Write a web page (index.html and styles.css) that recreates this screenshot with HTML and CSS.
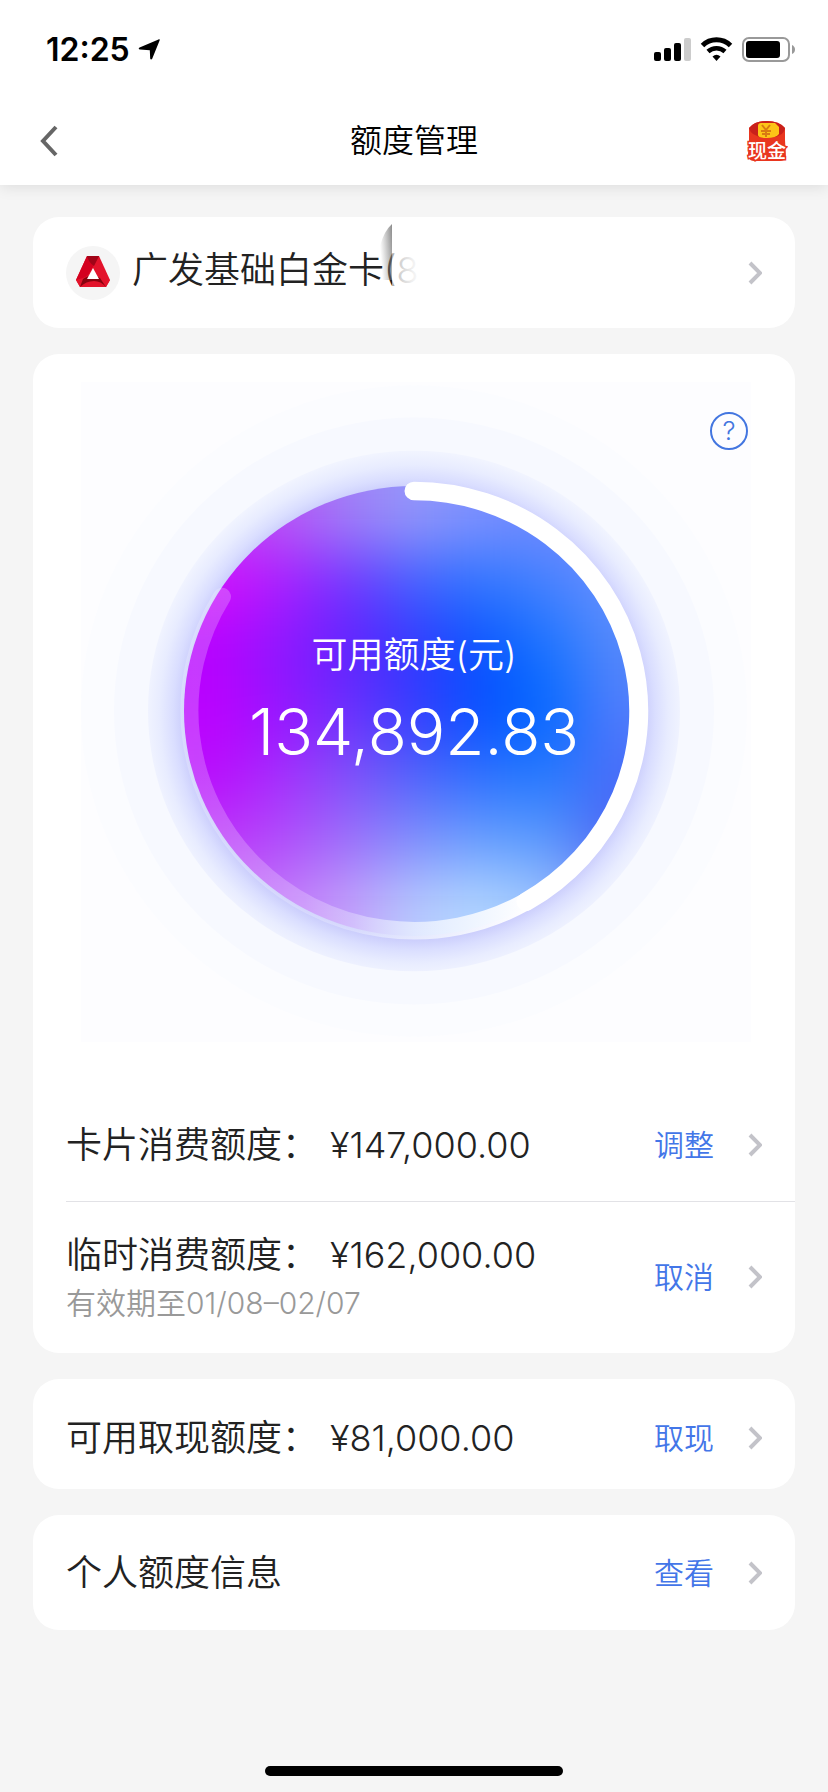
FILE: index.html
```html
<!DOCTYPE html>
<html lang="zh-CN">
<head>
<meta charset="utf-8">
<meta name="viewport" content="width=device-width, initial-scale=1">
<title>额度管理</title>
<link rel="stylesheet" href="styles.css">
</head>
<body>
<svg class="defs" width="0" height="0" aria-hidden="true">
  <symbol id="chevron" viewBox="0 0 14 24"><path d="M2 2l10 10L2 22" fill="none" stroke="#c3c3c9" stroke-width="4"/></symbol>
</svg>
<header class="header">
  <div class="status">
    <span class="clock">12:25</span>
    <svg class="location" viewBox="0 0 22 22" width="22" height="22" aria-hidden="true"><path d="M20.500 .4C21.500 0 22 .6 21.600 1.600L14.200 19.800C13.600 21 12.300 20.800 12.200 19.500L11.800 11.200 2 10.400C.5 10.200 .3 9 1.600 8.400Z"/></svg>
    <svg class="indicators" viewBox="0 0 142 26" width="142" height="26" aria-hidden="true">
      <rect x="0" y="15" width="7" height="9" rx="2"/>
      <rect x="10" y="11" width="7" height="13" rx="2"/>
      <rect x="20" y="6" width="7" height="18" rx="2"/>
      <rect x="30" y="1" width="7" height="23" rx="2" fill="#ccc"/>
      <path d="M48.500 8.500a20 20 0 0 1 28 0" fill="none" stroke="#000" stroke-width="5"/>
      <path d="M54 14.500a12.500 12.500 0 0 1 17 0" fill="none" stroke="#000" stroke-width="4.500"/>
      <path d="M58.500 19.500q4-3.500 8 0l-4 4.500z"/>
      <rect x="89" y="1" width="46" height="23" rx="6" fill="none" stroke="#999" stroke-width="2"/>
      <rect x="92" y="4" width="34" height="17" rx="3"/>
      <path d="M138 8q3 1.500 3 4.500t-3 4.500z" fill="#999"/>
    </svg>
  </div>
  <nav class="nav">
    <button class="icon-button" aria-label="返回">
      <svg viewBox="0 0 18 32" width="18" height="32"><path d="M16 2L3 16l13 14" fill="none" stroke="#666" stroke-width="4"/></svg>
    </button>
    <h1 class="title">额度管理</h1>
    <button class="icon-button cash" aria-label="现金">
      <svg viewBox="0 0 42 42" width="42" height="42">
        <path d="M3 8Q9 1 21 1t18 7v12l1 18q-2 3-6 3H8q-4 0-5-3l-1-4 1-14z" fill="#e9361f"/>
        <path d="M3 8Q9 1 21 1t18 7q-1 9-18 10Q5 17 3 8z" fill="#c9201a"/>
        <path d="M12 6q0-3 3-3h14l4 4v7q-3 4-12 4-9 0-9-3z" fill="#fdc417"/>
        <path d="M16 5l4 5 4-5M20 10v7M15 11h10M16 14h8" fill="none" stroke="#d97a12" stroke-width="2"/>
        <text class="cash-text" x="21" y="38" text-anchor="middle">现金</text>
      </svg>
    </button>
  </nav>
</header>

<main class="content">
  <button class="card card-picker">
    <svg class="bank" viewBox="0 0 54 54" width="54" height="54" aria-hidden="true">
      <circle cx="27" cy="27" r="27" fill="#f5f5f5"/>
      <path d="M21 10h12l11 24-4 7H14l-4-7z" fill="#e3132b"/>
      <path d="M21 10h12l-5 9-6 10-5 4-7 1z" fill="#d4001f"/>
      <path d="M21 10h12l-5 10q-5-3-7-10z" fill="#a00417"/>
      <path d="M10 34l7-2q8-4 13-1l14 3-4 7H14z" fill="#e3132b"/>
      <path d="M17 33q8-6 17-1l6 9q-5-6-12-6-8 0-14 6z" fill="#86040f"/>
      <path d="M27 22l6 11H21z" fill="#fff"/>
    </svg>
    <span class="card-name">广发基础白金卡(8
      <svg class="smudge" viewBox="0 0 120 66" width="120" height="66" aria-hidden="true">
        <defs>
          <linearGradient id="smudge-dark" x1="0" x2="1" y1=".3" y2="0"><stop offset=".1" stop-color="#888" stop-opacity="0"/><stop offset="1" stop-color="#777" stop-opacity=".85"/></linearGradient>
          <linearGradient id="smudge-light" x1="0" x2="1"><stop offset="0" stop-color="#fff" stop-opacity=".6"/><stop offset=".08" stop-color="#fff" stop-opacity=".8"/><stop offset=".2" stop-color="#fff" stop-opacity=".94"/><stop offset=".3" stop-color="#fff"/></linearGradient>
        </defs>
        <path d="M14 0Q6 7 2 22L0 56h14z" fill="url(#smudge-dark)"/>
        <rect x="14" y="0" width="106" height="66" fill="url(#smudge-light)"/>
      </svg>
    </span>
    <svg class="chevron" width="14" height="24"><use href="#chevron"/></svg>
  </button>

  <section class="card summary">
    <div class="gauge">
      <svg class="dial" viewBox="0 0 670 660" aria-hidden="true">
        <defs>
          <clipPath id="disk"><circle r="230"/></clipPath>
          <filter id="soft" x="-20%" y="-20%" width="140%" height="140%" color-interpolation-filters="sRGB"><feGaussianBlur stdDeviation="31"/></filter>
          <radialGradient id="glow" gradientUnits="userSpaceOnUse" cx="0" cy="3" r="268">
            <stop offset=".84" stop-color="#c4c6fb"/><stop offset=".9" stop-color="#dadeff"/><stop offset=".95" stop-color="#e8ecff"/><stop offset="1" stop-color="#f1f4ff"/>
          </radialGradient>
          <linearGradient id="fade" gradientUnits="userSpaceOnUse" x1="-234" y1="0" x2="112" y2="0">
            <stop offset="0" stop-color="#fff" stop-opacity=".22"/><stop offset=".36" stop-color="#fff" stop-opacity=".22"/>
            <stop offset=".5" stop-color="#f2f6ff" stop-opacity=".34"/><stop offset=".68" stop-color="#f2f6ff" stop-opacity=".7"/><stop offset="1" stop-color="#fff"/>
          </linearGradient>
        </defs>
        <rect width="670" height="660" fill="#fdfdff"/>
        <g transform="translate(333 329) scale(1 .978)">
          <circle r="333" fill="#fbfcff"/>
          <circle r="300" fill="#f7f9ff"/>
          <circle r="266" fill="url(#glow)"/>
          <g clip-path="url(#disk)">
            <g filter="url(#soft)">
              <path fill="#c040fa" d="M-324-324h160v160h-160z"/><path fill="#b858f5" d="M-164-324h66v160h-66z"/><path fill="#a080f8" d="M-98-324h66v160h-66z"/><path fill="#9498fa" d="M-32-324h66v160h-66z"/><path fill="#7c90ff" d="M34-324h66v160h-66z"/><path fill="#6c88ff" d="M100-324h66v160h-66z"/><path fill="#7a8cff" d="M166-324h160v160h-160z"/>
              <path fill="#d40cfc" d="M-324-164h160v66h-160z"/><path fill="#a81cff" d="M-164-164h66v66h-66z"/><path fill="#7034ff" d="M-98-164h66v66h-66z"/><path fill="#4060ff" d="M-32-164h66v66h-66z"/><path fill="#2c76ff" d="M34-164h66v66h-66z"/><path fill="#4480ff" d="M100-164h66v66h-66z"/><path fill="#6490ff" d="M166-164h160v66h-160z"/>
              <path fill="#b400ff" d="M-324-98h160v66h-160z"/><path fill="#8c18ff" d="M-164-98h66v66h-66z"/><path fill="#6020ff" d="M-98-98h66v66h-66z"/><path fill="#3038ff" d="M-32-98h66v66h-66z"/><path fill="#0654ff" d="M34-98h66v66h-66z"/><path fill="#1874ff" d="M100-98h66v66h-66z"/><path fill="#5488fa" d="M166-98h160v66h-160z"/>
              <path fill="#bc00ff" d="M-324-32h160v66h-160z"/><path fill="#9414ff" d="M-164-32h66v66h-66z"/><path fill="#6a30fc" d="M-98-32h66v66h-66z"/><path fill="#343cfe" d="M-32-32h66v66h-66z"/><path fill="#0450ff" d="M34-32h66v66h-66z"/><path fill="#0068ff" d="M100-32h66v66h-66z"/><path fill="#507cfc" d="M166-32h160v66h-160z"/>
              <path fill="#b80cfc" d="M-324 34h160v66h-160z"/><path fill="#a430fc" d="M-164 34h66v66h-66z"/><path fill="#8050f8" d="M-98 34h66v66h-66z"/><path fill="#5064fa" d="M-32 34h66v66h-66z"/><path fill="#2c70fe" d="M34 34h66v66h-66z"/><path fill="#247afe" d="M100 34h66v66h-66z"/><path fill="#486cf8" d="M166 34h160v66h-160z"/>
              <path fill="#bc34f8" d="M-324 100h160v66h-160z"/><path fill="#b04cfa" d="M-164 100h66v66h-66z"/><path fill="#9c70fa" d="M-98 100h66v66h-66z"/><path fill="#8090fc" d="M-32 100h66v66h-66z"/><path fill="#68a0ff" d="M34 100h66v66h-66z"/><path fill="#5c9afc" d="M100 100h66v66h-66z"/><path fill="#4c64f4" d="M166 100h160v66h-160z"/>
              <path fill="#c060f8" d="M-324 166h160v160h-160z"/><path fill="#c47cfa" d="M-164 166h66v160h-66z"/><path fill="#c4a0fa" d="M-98 166h66v160h-66z"/><path fill="#b8ccfe" d="M-32 166h66v160h-66z"/><path fill="#b4d8ff" d="M34 166h66v160h-66z"/><path fill="#a0c4fe" d="M100 166h66v160h-66z"/><path fill="#7890f4" d="M166 166h160v160h-160z"/>
            </g>
          </g>
          <path d="M112 195A225 225 0 0 1-192-117" fill="none" stroke="url(#fade)" stroke-width="18" stroke-linecap="round"/>
          <path d="M0-225A225 225 0 0 1 112 195" fill="none" stroke="#fff" stroke-width="19" stroke-linecap="round"/>
        </g>
      </svg>
      <div class="reading">
        <span class="reading-label">可用额度(元)</span>
        <strong class="reading-value">134,892.83</strong>
      </div>
      <button class="help" aria-label="帮助">?</button>
    </div>
    <div class="row row-limit">
      <div class="info"><p class="line"><span>卡片消费额度：</span><span>¥147,000.00</span></p></div>
      <a class="action" href="#">调整<svg class="chevron" width="14" height="24"><use href="#chevron"/></svg></a>
    </div>
    <div class="row row-temp">
      <div class="info"><p class="line"><span>临时消费额度：</span><span>¥162,000.00</span></p><p class="note">有效期至01/08–02/07</p></div>
      <a class="action" href="#">取消<svg class="chevron" width="14" height="24"><use href="#chevron"/></svg></a>
    </div>
  </section>

  <section class="card row row-cash">
    <div class="info"><p class="line"><span>可用取现额度：</span><span>¥81,000.00</span></p></div>
    <a class="action" href="#">取现<svg class="chevron" width="14" height="24"><use href="#chevron"/></svg></a>
  </section>

  <section class="card row row-profile">
    <div class="info"><p class="line"><span>个人额度信息</span></p></div>
    <a class="action" href="#">查看<svg class="chevron" width="14" height="24"><use href="#chevron"/></svg></a>
  </section>
</main>
<footer class="home"><span class="home-bar"></span></footer>
</body>
</html>
```
FILE: styles.css
```css
* { box-sizing: border-box; }
body {
  margin: 0;
  min-height: 100vh;
  display: flex;
  flex-direction: column;
  background: #f5f5f5;
  color: #222;
  font-family: Inter, "Noto Sans CJK SC", sans-serif;
  font-weight: 350;
}
button { border: 0; padding: 0; background: none; color: inherit; font: inherit; }
a { text-decoration: none; }
p, h1 { margin: 0; }
svg { display: block; }
.defs { position: absolute; }

.header { background: #fff; box-shadow: 0 2px 14px rgba(0, 0, 0, .1); color: #000; }
.status { display: flex; align-items: center; height: 96px; padding: 4px 32px 0 46px; }
.clock { font-size: 32px; font-weight: 600; line-height: 40px; }
.location { margin-left: 8px; }
.indicators { margin-left: auto; }
.nav { display: flex; align-items: center; justify-content: space-between; height: 89px; padding: 0 40px; }
.icon-button { display: flex; width: 42px; }
.title { font-size: 32px; font-weight: 350; line-height: 40px; }
.cash-text { font: 500 19px "Noto Sans CJK SC", sans-serif; fill: #fff; stroke: #e9361f; stroke-width: 3px; paint-order: stroke; }

.content { display: flex; flex-direction: column; gap: 26px; padding: 32px 33px 0; }
.card { background: #fff; border-radius: 26px; }
.card-picker { display: flex; align-items: center; width: 100%; height: 111px; padding: 0 33px; text-align: left; }
.card-name { position: relative; margin: 0 auto 6px 12px; font-size: 36px; line-height: 48px; white-space: nowrap; }
.smudge { position: absolute; left: 246px; top: -22px; }

.summary { overflow: hidden; }
.gauge { position: relative; padding: 28px 44px 34px 48px; }
.dial { width: 100%; height: auto; }
.reading { position: absolute; inset: 277px 0 auto; display: flex; flex-direction: column; align-items: center; gap: 13px; color: #fff; }
.reading-label { font-size: 36px; line-height: 48px; }
.reading-value { font-size: 64px; font-weight: 300; line-height: 80px; }
.help { position: absolute; top: 58px; right: 47px; width: 38px; height: 38px; border: 2px solid #4376e0; border-radius: 50%; color: #4376e0; font-size: 26px; line-height: 34px; text-align: center; }

.row { display: flex; align-items: center; justify-content: space-between; padding: 0 33px; }
.line { display: flex; gap: 12px; font-size: 36px; line-height: 48px; }
.note { font-size: 30px; line-height: 40px; color: #999; margin-top: 4px; }
.action { display: flex; align-items: center; gap: 34px; font-size: 30px; line-height: 40px; color: #4376e8; }
.row-limit { height: 125px; padding-top: 12px; }
.row-temp { position: relative; height: 152px; }
.row-temp::before { content: ""; position: absolute; top: 0; left: 33px; right: 0; height: 1px; background: #e2e2e6; }
.row-cash { height: 110px; padding-top: 8px; }
.row-profile { height: 115px; }

.home { display: flex; justify-content: center; margin-top: auto; padding: 16px 0; }
.home-bar { width: 36%; height: 10px; border-radius: 5px; background: #000; }
```
